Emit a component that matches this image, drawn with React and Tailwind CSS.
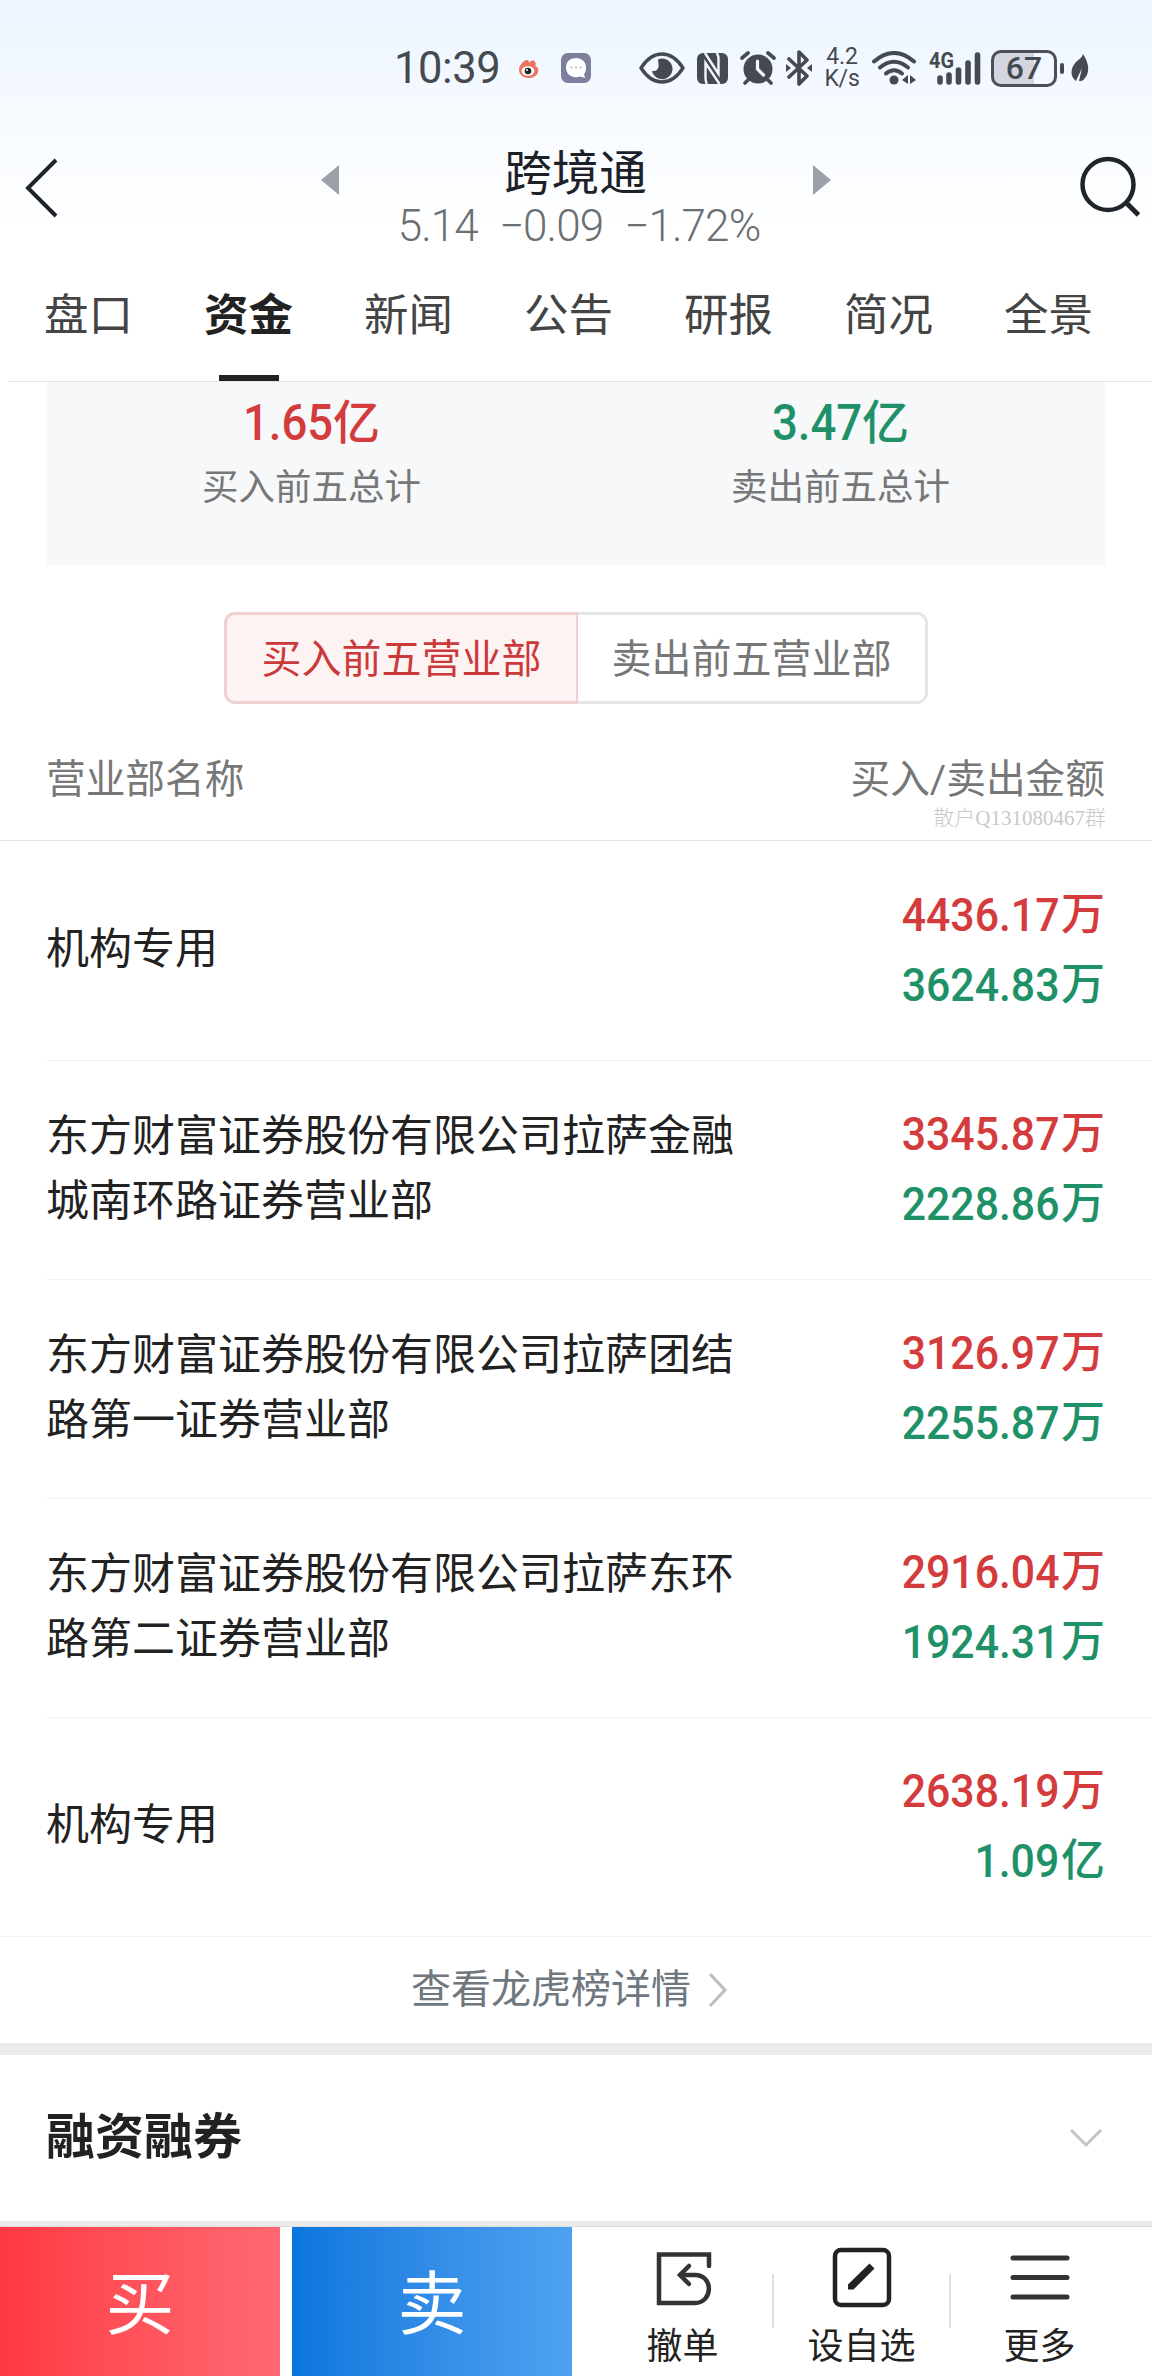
const tabs = ['盘口', '资金', '新闻', '公告', '研报', '简况', '全景']

const rows = [
    { name: '机构专用', buy: '4436.17', sell: '3624.83' },
    { name: '东方财富证券股份有限公司拉萨金融城南环路证券营业部', buy: '3345.87', sell: '2228.86' },
    { name: '东方财富证券股份有限公司拉萨团结路第一证券营业部', buy: '3126.97', sell: '2255.87' },
    { name: '东方财富证券股份有限公司拉萨东环路第二证券营业部', buy: '2916.04', sell: '1924.31' },
    { name: '机构专用', buy: '2638.19', sell: '1.09', sellUnit: '亿' },
]

const Amount = ({ value, unit = '万', className }) => (
    <div className={`flex items-center font-medium ${className}`}>
        <span className="origin-right scale-x-[.92] text-[46.5px]">{value}</span>
        <span className="ml-[2px] text-[44px]">{unit}</span>
    </div>
)

const Total = ({ value, label, className }) => (
    <div className="flex w-1/2 flex-col items-center">
        <div className={`flex h-[60px] items-center font-medium ${className}`}>
            <span className="-ml-[9px] origin-right scale-x-[.91] text-[50px]">{value}</span>
            <span className="text-[47px]">亿</span>
        </div>
        <span className="mt-[11px] text-[36.5px] leading-[48px] text-[#777]">{label}</span>
    </div>
)

const StatusBar = () => (
    <div className="flex h-[136px] items-center pl-[394px] text-[#454a50]">
        <span className="w-[122px] pt-[2px] text-[43.5px] font-normal tracking-[-0.4px]">10:39</span>
        <svg width="26" height="26" viewBox="0 0 26 26" className="shrink-0">
            <path d="M3 15c0-5 5-10 8-10 2 0 2 2 2 3 2-3 5-3 6-1 1 1 1 3 0 4 3 1 4 3 3 6-1 4-5 6-10 6S3 19 3 15z" fill="#e9745f" />
            <ellipse cx="12" cy="16" rx="6.5" ry="4.8" fill="#fff" />
            <circle cx="12" cy="16" r="3.3" fill="#222" />
            <circle cx="11" cy="15" r="1" fill="#fff" />
        </svg>
        <svg width="30" height="30" viewBox="0 0 30 30" className="ml-[19px] shrink-0">
            <rect width="30" height="30" rx="7" fill="#7d7f9f" />
            <path d="M15 5c6 0 10 4 10 9.500 0 3-.5 5-2 6.500l1 4-5-1.500c-1 .5-2.500.7-4 .7-6 0-10-4-10-9.700S9 5 15 5z" fill="#fff" />
            <path d="M10.500 14.500h.1M15 14.500h.1M19.500 14.500h.1" stroke="#b7b9aa" strokeWidth="2.200" strokeLinecap="round" />
        </svg>
        <svg width="46" height="32" viewBox="0 0 46 32" className="ml-[48px] shrink-0">
            <path d="M2 16Q11 2 23 2t21 14Q35 30 23 30T2 16z" fill="none" stroke="currentColor" strokeWidth="3.400" strokeLinejoin="round" />
            <path d="M19 7.500a10.300 10.300 0 1 1-6 11c3 1.500 6-.5 6.500-3.500.4-3-.5-5-.5-7.500z" fill="currentColor" />
        </svg>
        <svg width="31" height="31" viewBox="0 0 31 31" className="ml-3 shrink-0">
            <rect width="31" height="31" rx="6" fill="currentColor" />
            <path d="M10 31C8.500 29 8.500 27 8.500 25V10l14 21M8 0l13.500 21V6c0-3-.5-4.500-2-6" fill="none" stroke="#f3f7ff" strokeWidth="2.400" />
        </svg>
        <svg width="36" height="34" viewBox="0 0 36 34" className="ml-3 shrink-0">
            <circle cx="18" cy="18" r="14.500" fill="currentColor" />
            <path d="M2 7l6-5M34 7l-6-5M8 29l-3 3M28 29l3 3" stroke="currentColor" strokeWidth="3.600" strokeLinecap="round" />
            <path d="M17.500 10v8l6 6" fill="none" stroke="#f3f7ff" strokeWidth="3.200" strokeLinecap="round" />
        </svg>
        <svg width="26" height="36" viewBox="0 0 26 36" className="ml-[10px] shrink-0">
            <path d="M3 9l18 17-8 8V2l8 8L3 27" fill="none" stroke="currentColor" strokeWidth="3.600" strokeLinecap="round" strokeLinejoin="round" />
            <path d="M0 14l5 4-5 4zM26 14l-5 4 5 4z" fill="currentColor" />
        </svg>
        <div className="ml-[12px] w-[36px] text-center text-[23px] leading-[22px] tracking-[-0.2px]">
            <div>4.2</div>
            <div>K/s</div>
        </div>
        <svg width="44" height="34" viewBox="0 0 44 34" className="ml-[12px] shrink-0">
            <g fill="none" stroke="currentColor" strokeWidth="4" strokeLinecap="round">
                <path d="M2 10.500Q22-6.500 42 10.500" />
                <path d="M8 16.500Q22 5 36 16.500" />
                <path d="M14 22.500Q22 16 30 22.500" />
            </g>
            <circle cx="22" cy="29" r="4.500" fill="currentColor" />
            <path d="M36 24v9l-6-4zM38 24v9l6-4z" fill="currentColor" />
        </svg>
        <svg width="52" height="48" viewBox="0 -6 52 48" className="ml-[13px] shrink-0">
            <text x="0" y="18" fontSize="22" fontWeight="700" fontFamily="Roboto" textLength="25" lengthAdjust="spacingAndGlyphs" fill="currentColor">4G</text>
            <path d="M11 28v4M20 25v7M29.500 20v12M39 13v19M48.500 5v27" stroke="currentColor" strokeWidth="5.600" strokeLinecap="round" />
        </svg>
        <div className="ml-[10px] flex h-[37px] w-[66px] items-center justify-center rounded-[10px] border-[3px] border-[#4b4f56] bg-linear-to-r from-[#d3d6e0] from-67% to-[#f3f7ff] to-67%">
            <span className="text-[32px] font-medium">67</span>
        </div>
        <div className="ml-[3px] h-[11px] w-1 rounded bg-[#454a50]" />
        <svg width="18" height="30" viewBox="0 0 18 30" className="ml-[7px] shrink-0">
            <path d="M12 1c6 9 7 18 2 24-2 3-4 3-6 3l3-13-6 13C-1 24-1 15 5 9c3-3 6-4 7-8z" fill="currentColor" />
        </svg>
    </div>
)

const Header = () => (
    <header className="flex h-[134px] items-start justify-between pt-[11px]">
        <svg width="36" height="62" viewBox="0 0 36 62" fill="none" className="mt-[10px] ml-6">
            <path d="M32 3L4 31l28 28" stroke="#20242a" strokeWidth="4" />
        </svg>
        <div className="ml-[14px] flex w-[510px] items-start justify-between">
            <svg width="18" height="30" viewBox="0 0 18 30" className="mt-[18px]">
                <path d="M18 0v30L0 15z" fill="#9aa1a9" />
            </svg>
            <div className="flex flex-col items-center">
                <h1 className="mt-[2px] -ml-[1px] text-[47.5px] leading-[50px] text-[#1d2127]">跨境通</h1>
                <div className="mt-[2px] ml-[6px] flex gap-[21px] text-[44px] leading-[50px] font-light tracking-[-0.9px] text-[#6a6f73]">
                    <span>5.14</span>
                    <span>−0.09</span>
                    <span>−1.72%</span>
                </div>
            </div>
            <svg width="18" height="30" viewBox="0 0 18 30" className="mt-[18px]">
                <path d="M0 0v30l18-15z" fill="#9aa1a9" />
            </svg>
        </div>
        <svg width="64" height="64" viewBox="0 0 64 64" fill="none" className="mt-[8px] mr-[10px]">
            <ellipse cx="30" cy="29.500" rx="25.500" ry="25.500" stroke="#20242a" strokeWidth="4.500" />
            <path d="M47.500 47l13 13" stroke="#20242a" strokeWidth="5" />
        </svg>
    </header>
)

const BottomItem = ({ label, className, children }) => (
    <div className={`flex flex-col items-center pt-[19px] ${className}`}>
        {children}
        <span className="mt-[15px] text-[36px] leading-[48px] text-[#222]">{label}</span>
    </div>
)

const App = () => {
    return (
        <div className="h-[2376px] w-[1152px] overflow-hidden bg-white font-[Roboto,'Noto_Sans_CJK_SC',sans-serif]">
            <div className="h-[382px] bg-linear-to-b from-[#edf5ff] to-white to-[230px]">
                <StatusBar />
                <Header />
                <nav className="ml-2 flex h-[112px] border-b border-[#e2e3e5]">
                    {tabs.map((tab) => (
                        <div
                            key={tab}
                            className={`relative w-[160px] pt-[14px] pl-[1px] text-center text-[44.5px] leading-[64px] ${tab === '资金' ? 'font-bold text-[#222]' : 'text-[#444]'}`}
                        >
                            {tab}
                            {tab === '资金' && <div className="absolute bottom-0 left-[51px] h-[6px] w-[60px] bg-[#222]" />}
                        </div>
                    ))}
                </nav>
            </div>

            <section className="mx-[47px] flex h-[183px] bg-[#f6f8fa] pt-[11px] text-center">
                <Total value="1.65" label="买入前五总计" className="text-[#d43b3c]" />
                <Total value="3.47" label="卖出前五总计" className="text-[#1f9168]" />
            </section>

            <div className="mx-auto mt-[47px] flex h-[92px] w-[704px] text-[40px]">
                <button className="flex w-[354px] items-center justify-center rounded-l-[11px] border-[3px] border-r-2 border-[#efd0d0] bg-[#fef3f3] pt-1 text-[#cb3a3a]">
                    买入前五营业部
                </button>
                <button className="flex w-[350px] items-center justify-center rounded-r-[11px] border-[3px] border-l-0 border-[#e6e6e6] pt-1 text-[#777]">
                    卖出前五营业部
                </button>
            </div>

            <div className="flex h-[137px] justify-between border-b border-[#e4e5e6] pt-[52px] pr-[47px] pl-[46px] text-[39.7px] leading-[48px] text-[#777]">
                <span>营业部名称</span>
                <div className="flex flex-col items-end">
                    <span>买入/卖出金额</span>
                    <span className="mt-[2px] -mr-[1px] font-['Liberation_Serif','Noto_Sans_CJK_SC',serif] text-[21px] leading-[24px] font-light text-[#c9c9c9]">
                        散户Q131080467群
                    </span>
                </div>
            </div>

            <div className="pt-[1px]">
                {rows.map((row, i) => (
                    <div key={i} className={`h-[219px] ${i === rows.length - 1 ? '' : 'pl-[47px]'}`}>
                        <div
                            className={`flex h-full items-center justify-between border-b border-[#f0f1f2] pr-[47px] pb-[3px] ${i === rows.length - 1 ? 'pl-[47px]' : ''}`}
                        >
                            <div className="-ml-[1px] w-[700px] text-[43px] leading-[65px] text-[#222]">{row.name}</div>
                            <div className="flex flex-col items-end leading-[70px]">
                                <Amount value={row.buy} className="h-[70px] text-[#d43b3c]" />
                                <Amount value={row.sell} unit={row.sellUnit} className="h-[70px] text-[#1f9168]" />
                            </div>
                        </div>
                    </div>
                ))}
            </div>

            <div className="flex h-[106px] items-center justify-center gap-[17px] pr-[13px] text-[40px] text-[#6f777f]">
                查看龙虎榜详情
                <svg width="20" height="36" viewBox="0 0 20 36" fill="none">
                    <path d="M2 2l15 16L2 34" stroke="#b9bec2" strokeWidth="3" />
                </svg>
            </div>
            <div className="h-3 bg-[#ebebeb]" />
            <div className="flex h-[166px] items-center justify-between pr-[49px] pl-[46px]">
                <h2 className="text-[49px] font-bold text-[#222]">融资融券</h2>
                <svg width="34" height="20" viewBox="0 0 34 20" fill="none">
                    <path d="M2 2l15 15L32 2" stroke="#c2c5c8" strokeWidth="3" />
                </svg>
            </div>
            <div className="h-[6px] border-b border-[#dedede] bg-[#ebebeb]" />

            <footer className="flex h-[149px]">
                <button className="w-[280px] bg-linear-to-r from-[#ff3842] to-[#ff6872] pt-2 text-[69px] text-white">买</button>
                <button className="ml-3 w-[280px] bg-linear-to-r from-[#0876dc] to-[#4fa2f1] pt-2 text-[69px] text-white">卖</button>
                <div className="ml-[21px] flex">
                    <BottomItem label="撤单" className="w-[179px]">
                        <svg width="60" height="62" viewBox="0 0 60 62" fill="none" stroke="#333" strokeWidth="4.500" className="ml-[3px]">
                            <path d="M55 20V8.500H5V57h36c18 0 19-28 0-28H27" strokeLinecap="round" />
                            <path d="M35 20L26 29l9 9" strokeLinecap="round" />
                        </svg>
                    </BottomItem>
                    <div className="mt-[47px] h-[54px] w-[2px] bg-[#e0e0e0]" />
                    <BottomItem label="设自选" className="w-[175px]">
                        <svg width="60" height="62" viewBox="0 0 60 62" fill="none">
                            <rect x="3" y="4" width="54" height="55" rx="6" stroke="#222" strokeWidth="4.500" />
                            <path d="M37.500 17.500l5 5-21 21h-5.500v-5z" fill="#222" />
                        </svg>
                    </BottomItem>
                    <div className="mt-[47px] h-[54px] w-[2px] bg-[#e0e0e0]" />
                    <BottomItem label="更多" className="w-[177px]">
                        <svg width="60" height="62" viewBox="0 0 60 62" fill="none">
                            <path d="M3 12h54M3 31.500h54M3 51h54" stroke="#333" strokeWidth="5" strokeLinecap="round" />
                        </svg>
                    </BottomItem>
                </div>
            </footer>
        </div>
    )
}

export default App
